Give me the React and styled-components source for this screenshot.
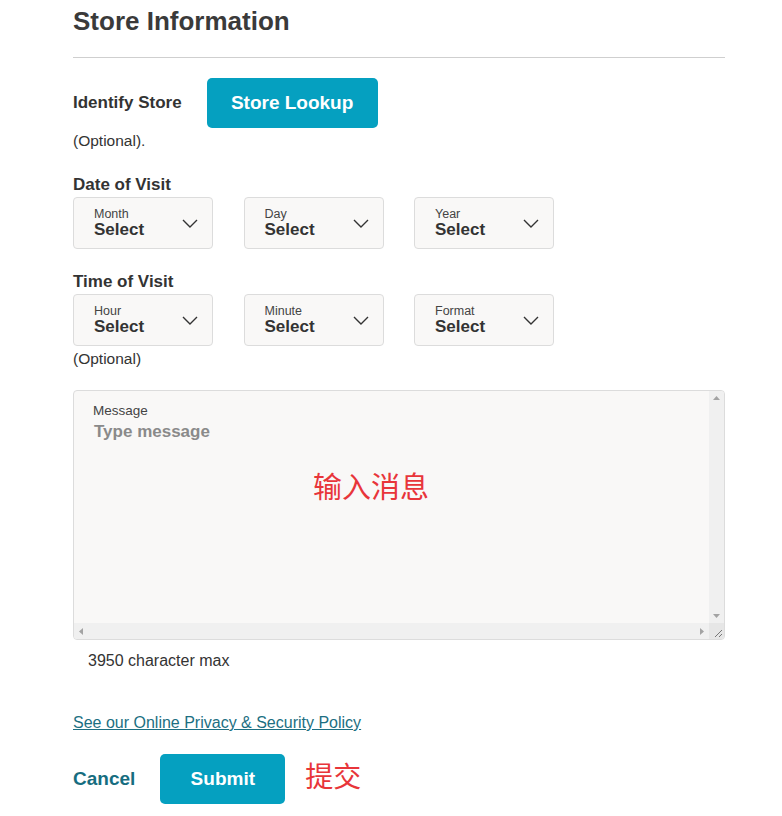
import React from "react"
import styled, { createGlobalStyle } from "styled-components"

const GlobalStyle = createGlobalStyle`
  body {
    margin: 0;
    background: #fff;
    font-family: "Liberation Sans", Arial, sans-serif;
    color: #333;
  }
`

const dateFields = ["Month", "Day", "Year"]
const timeFields = ["Hour", "Minute", "Format"]

const arrows = {
  up: "4,9 11,9 7.5,5",
  down: "4,6 11,6 7.5,10",
  left: "9,4 9,11 5,7.5",
  right: "6,4 6,11 10,7.5",
}

const Chevron = () => (
  <svg width="16" height="9" viewBox="0 0 16 9" fill="none">
    <path d="M1 1l7 7 7-7" stroke="#333" strokeWidth="1.4" />
  </svg>
)

const Arrow = ({ dir }) => (
  <ArrowButton>
    <svg width="15" height="15" viewBox="0 0 15 15">
      <polygon points={arrows[dir]} fill="#a3a3a3" />
    </svg>
  </ArrowButton>
)

const SelectBox = ({ label }) => (
  <SelectButton type="button">
    <SelectText>
      <SmallLabel>{label}</SmallLabel>
      <SelectValue>Select</SelectValue>
    </SelectText>
    <Chevron />
  </SelectButton>
)

const App = () => {
  return (
    <>
      <GlobalStyle />
      <Page>
        <Title>Store Information</Title>
        <Divider />

        <IdentifyRow>
          <FieldLabel>Identify Store</FieldLabel>
          <PrimaryButton type="button" $width={171}>Store Lookup</PrimaryButton>
        </IdentifyRow>
        <Hint>(Optional).</Hint>

        <Group $top={24}>
          <FieldLabel>Date of Visit</FieldLabel>
          <SelectRow>
            {dateFields.map((f) => (
              <SelectBox key={f} label={f} />
            ))}
          </SelectRow>
        </Group>

        <Group $top={23}>
          <FieldLabel>Time of Visit</FieldLabel>
          <SelectRow>
            {timeFields.map((f) => (
              <SelectBox key={f} label={f} />
            ))}
          </SelectRow>
        </Group>
        <Hint>(Optional)</Hint>

        <MessageField>
          <MessageLabel>Message</MessageLabel>
          <MessageInput placeholder="Type message" wrap="off" />
          <ScrollbarV>
            <Arrow dir="up" />
            <Arrow dir="down" />
          </ScrollbarV>
          <ScrollbarH>
            <Arrow dir="left" />
            <Arrow dir="right" />
          </ScrollbarH>
          <Resizer>
            <svg width="15" height="15" viewBox="0 0 15 15">
              <path d="M13 6L6 13M13 10L10 13" stroke="#777" strokeWidth="1" />
            </svg>
          </Resizer>
          <Annotation $top={74} $left={240}>输入消息</Annotation>
        </MessageField>
        <CharCount>3950 character max</CharCount>

        <PolicyLink href="#">See our Online Privacy &amp; Security Policy</PolicyLink>

        <Actions>
          <CancelLink href="#">Cancel</CancelLink>
          <PrimaryButton type="button" $width={125}>Submit</PrimaryButton>
          <Note>提交</Note>
        </Actions>
      </Page>
    </>
  )
}

export default App

const Page = styled.main`
  width: 652px;
  padding: 0 0 13px 73px;
  display: flex;
  flex-direction: column;
`

const Title = styled.h2`
  margin: 6px 0 0;
  font-size: 26px;
  line-height: 30px;
  font-weight: 700;
  color: #3a3a3a;
`

const Divider = styled.hr`
  margin: 21px 0 0;
  border: 0;
  border-top: 1px solid #cfcfcf;
  width: 100%;
`

const IdentifyRow = styled.div`
  display: flex;
  align-items: center;
  gap: 25px;
  margin-top: 20px;
`

const FieldLabel = styled.div`
  font-size: 17px;
  line-height: 20px;
  font-weight: 700;
  color: #333;
`

const PrimaryButton = styled.button`
  width: ${(p) => p.$width}px;
  height: 50px;
  border: 0;
  border-radius: 5px;
  background: #05a0c0;
  color: #fff;
  font-family: inherit;
  font-size: 19px;
  font-weight: 700;
  cursor: pointer;
`

const Hint = styled.div`
  font-size: 15.5px;
  line-height: 20px;
  color: #333;
  margin-top: 3px;
`

const Group = styled.div`
  margin-top: ${(p) => p.$top}px;
  display: flex;
  flex-direction: column;
  gap: 2px;
`

const SelectRow = styled.div`
  display: flex;
  gap: 30.5px;
`

const SelectButton = styled.button`
  width: 140px;
  height: 52px;
  box-sizing: border-box;
  display: flex;
  align-items: center;
  justify-content: space-between;
  padding: 0 14px 0 20px;
  background: #f9f8f7;
  border: 1px solid #dcdcdc;
  border-radius: 4px;
  font-family: inherit;
  text-align: left;
  cursor: pointer;
`

const SelectText = styled.span`
  display: flex;
  flex-direction: column;
  margin-top: -1px;
`

const SmallLabel = styled.span`
  font-size: 12.5px;
  line-height: 14px;
  color: #444;
`

const SelectValue = styled.span`
  font-size: 17px;
  line-height: 18px;
  font-weight: 700;
  color: #333;
`

const MessageField = styled.div`
  position: relative;
  margin-top: 21px;
  height: 250px;
`

const MessageLabel = styled.label`
  position: absolute;
  top: 13px;
  left: 20px;
  font-size: 13.5px;
  color: #444;
`

const MessageInput = styled.textarea`
  display: block;
  width: 100%;
  height: 100%;
  box-sizing: border-box;
  padding: 31px 20px 10px;
  background: #f9f8f7;
  border: 1px solid #dcdcdc;
  border-radius: 4px;
  overflow: hidden;
  resize: none;
  font-family: inherit;
  font-size: 17px;
  color: #333;
  &::placeholder {
    color: #8a8a8a;
    font-weight: 700;
  }
`

const ScrollbarV = styled.div`
  position: absolute;
  top: 1px;
  right: 1px;
  bottom: 17px;
  width: 15px;
  display: flex;
  flex-direction: column;
  justify-content: space-between;
  background: #f0f0f0;
  border-top-right-radius: 3px;
`

const ScrollbarH = styled.div`
  position: absolute;
  left: 1px;
  right: 16px;
  bottom: 1px;
  height: 16px;
  display: flex;
  justify-content: space-between;
  align-items: center;
  background: #f0f0f0;
  border-bottom-left-radius: 3px;
`

const ArrowButton = styled.span`
  display: flex;
  width: 15px;
  height: 15px;
`

const Resizer = styled.div`
  position: absolute;
  right: 1px;
  bottom: 1px;
  width: 15px;
  height: 16px;
  display: flex;
  align-items: flex-end;
  background: #e6e6e6;
  border-bottom-right-radius: 3px;
`

const Annotation = styled.span`
  position: absolute;
  top: ${(p) => p.$top}px;
  left: ${(p) => p.$left}px;
  font-family: "Noto Sans CJK SC", sans-serif;
  font-size: 29px;
  color: #e8353a;
  pointer-events: none;
`

const CharCount = styled.div`
  margin: 11px 0 0 15px;
  font-size: 16px;
  line-height: 20px;
  color: #333;
`

const PolicyLink = styled.a`
  margin-top: 42px;
  align-self: flex-start;
  font-size: 16px;
  line-height: 20px;
  color: #1c6f82;
  text-decoration: underline;
`

const Actions = styled.div`
  display: flex;
  align-items: center;
  margin-top: 21px;
`

const CancelLink = styled.a`
  margin-right: 25px;
  font-size: 19px;
  font-weight: 700;
  color: #166d80;
  text-decoration: none;
`

const Note = styled.span`
  margin-left: 20px;
  margin-top: -8px;
  font-family: "Noto Sans CJK SC", sans-serif;
  font-size: 28px;
  color: #e8353a;
`
